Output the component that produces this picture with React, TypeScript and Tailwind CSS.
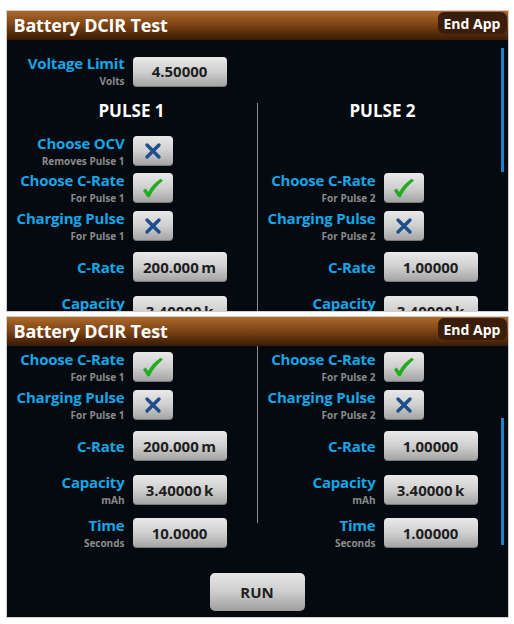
import React from "react";

const font = { fontFamily: '"Open Sans", "Noto Sans", sans-serif' };

function XIcon() {
  return (
    <svg width="18" height="18" viewBox="0 0 18 18">
      <path d="M3 3 L15 15 M15 3 L3 15" stroke="#1d4f8c" strokeWidth="3.4" strokeLinecap="round" />
    </svg>
  );
}

function CheckIcon() {
  return (
    <svg width="22" height="20" viewBox="0 0 22 20">
      <path
        d="M1 12.5 L3.6 10.4 L6.2 14 C9 9 13 4.5 18.6 0.8 L21 2.6 C15.6 7 11.2 12 7.6 19.2 L5.4 19.2 Z"
        fill="#20ad20"
      />
    </svg>
  );
}

function Btn({ children, wide }: { children: React.ReactNode; wide?: boolean }) {
  return (
    <div
      className={
        (wide ? "w-[94px] " : "w-[40px] ") +
        "h-[30px] rounded-[4px] bg-gradient-to-b from-[#e9e9e9] via-[#cfcfcf] to-[#a2a2a2] flex items-center justify-center text-[15px] font-bold text-[#1e1e1e] shadow-[inset_0_-1px_0_rgba(0,0,0,0.25)]"
      }
    >
      {children}
    </div>
  );
}

function Label({ title, sub }: { title: string; sub?: string }) {
  return (
    <div className={"w-[118px] flex flex-col items-end shrink-0" + (sub ? " h-[33px] justify-between" : "")}>
      <span className="text-[15px] leading-[17px] font-bold text-[#14a6e6] whitespace-nowrap tracking-[-0.2px]">{title}</span>
      {sub && <span className="text-[10px] leading-[13px] font-bold text-[#8a8a8a] whitespace-nowrap">{sub}</span>}
    </div>
  );
}

function Row({ title, sub, children, className }: { title: string; sub?: string; children: React.ReactNode; className: string }) {
  return (
    <div className={"flex items-center gap-[8px] h-[30px] " + className}>
      <Label title={title} sub={sub} />
      {children}
    </div>
  );
}

function PulseColumn({ n, crate, ocv }: { n: number; crate: string; ocv?: boolean }) {
  return (
    <div className="w-[251px] flex flex-col">
      <div className="h-[16px] leading-[16px] text-center text-[17px] font-bold text-white">PULSE {n}</div>
      {ocv ? (
        <Row title="Choose OCV" sub={`Removes Pulse ${n}`} className="mt-[17px]">
          <Btn>
            <XIcon />
          </Btn>
        </Row>
      ) : (
        <div className="mt-[17px] h-[30px]" />
      )}
      <Row title="Choose C-Rate" sub={`For Pulse ${n}`} className="mt-[7px]">
        <Btn>
          <CheckIcon />
        </Btn>
      </Row>
      <Row title="Charging Pulse" sub={`For Pulse ${n}`} className="mt-[8px]">
        <Btn>
          <XIcon />
        </Btn>
      </Row>
      <Row title="C-Rate" className="mt-[11px]">
        <Btn wide>{crate}</Btn>
      </Row>
      <Row title="Capacity" sub="mAh" className="mt-[14px]">
        <Btn wide>3.40000{"\u2009"}k</Btn>
      </Row>
      <Row title="Time" sub="Seconds" className="mt-[13px]">
        <Btn wide>{n === 1 ? "10.0000" : "1.00000"}</Btn>
      </Row>
    </div>
  );
}

function Content() {
  return (
    <div className="flex flex-col">
      <Row title="Voltage Limit" sub="Volts" className="mt-[16px] !h-[31px]">
        <Btn wide>4.50000</Btn>
      </Row>
      <div className="flex items-start mt-[16px]">
        <PulseColumn n={1} crate={"200.000\u2009m"} ocv />
        <div className="w-px h-[241px] bg-[#8a8a8a]" />
        <PulseColumn n={2} crate="1.00000" />
      </div>
      <div className="flex justify-center mt-[25px] pb-[8px]">
        <div className="w-[95px] h-[38px] rounded-[5px] bg-gradient-to-b from-[#e6e6e6] via-[#cdcdcd] to-[#9e9e9e] flex items-center justify-center text-[15px] font-bold text-[#1e1e1e]">
          RUN
        </div>
      </div>
    </div>
  );
}

function Screen({ scrolled }: { scrolled?: boolean }) {
  return (
    <div className="w-[503px] mx-auto border border-[#cfcfcf]">
      <div className="h-[29px] bg-gradient-to-b from-[#ad6a2c] via-[#7a4214] to-[#3a1b06] flex items-start justify-between pl-[7px] pr-[1px]">
        <span className="text-[18px] leading-[29px] font-bold text-white tracking-[-0.2px]">Battery DCIR Test</span>
        <div className="mt-[1px] w-[69px] h-[22px] rounded-[6px] bg-[#3b1e0a] flex items-center justify-center text-[14px] font-bold text-white">
          End App
        </div>
      </div>
      <div className="relative h-[271px] overflow-hidden bg-[#050a10]">
        <div className={scrolled ? "-mt-[127px]" : ""}>
          <Content />
        </div>
        <div
          className={
            "absolute right-[4px] w-[3px] bg-[#1786c8] " + (scrolled ? "top-[72px] h-[127px]" : "top-[8px] h-[124px]")
          }
        />
      </div>
    </div>
  );
}

export default function App() {
  return (
    <div className="w-[514px] h-[624px] bg-white pt-[10px] flex flex-col gap-[4px]" style={font}>
      <Screen />
      <Screen scrolled />
    </div>
  );
}
